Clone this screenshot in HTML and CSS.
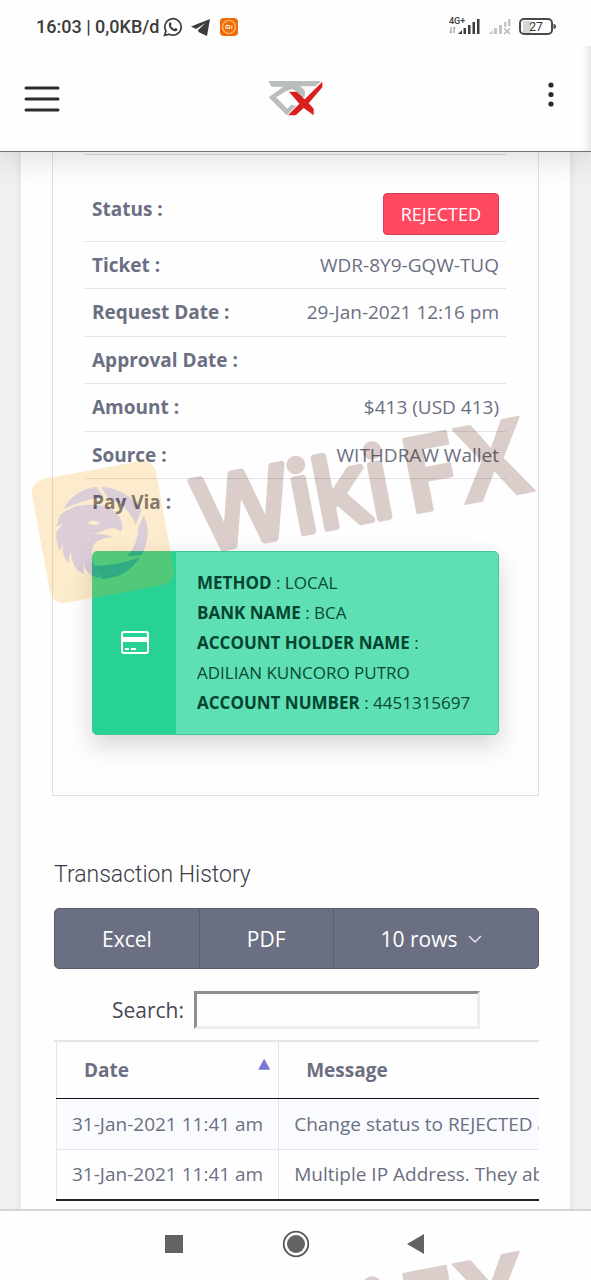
FILE: index.html
```
<!DOCTYPE html>
<html lang="en">
<head>
    <meta charset="UTF-8">
    <meta name="viewport" content="width=device-width, initial-scale=1.0">
    <title>Withdrawal</title>
    <link rel="stylesheet" href="styles.css">
</head>
<body>
    <!-- Phone status bar -->
    <div class="status-bar">
        <span class="clock">16:03 | 0,0KB/d</span>
        <svg class="status-icon" width="20" height="20" viewBox="0 0 20 20" fill="none" stroke="#3c3c3c" stroke-width="1.7">
            <path d="M1.6 18.4 L2.9 14 A8.2 8.2 0 1 1 6.2 17.2 Z"/>
            <path d="M6.6 5.6 C7.4 5 8 5.400 8.500 7.400 L7.800 8.500 C8.600 10.200 9.800 11.300 11.500 12 L12.600 10.900 C14.500 11.600 14.800 12 14.300 13 C13.400 14.600 11.500 14.600 9 13 C6.500 11.300 4.800 8 6.600 5.600 Z" fill="#3c3c3c" stroke="none"/>
        </svg>
        <svg class="status-icon plane" width="20" height="18" viewBox="0 0 20 18" fill="#3c3c3c">
            <path d="M19 1 L0 8.500 L5 11 L14.500 5 L7 12 L7.500 14 L16 18 Z"/>
        </svg>
        <svg class="status-icon" width="20" height="20" viewBox="0 0 20 20">
            <rect x="1" y="1" width="18" height="18" rx="4" fill="#ef6c0a"/>
            <circle cx="10" cy="10" r="6.500" fill="none" stroke="#ffc07a" stroke-width="1.200"/>
            <path d="M7 12 V8.500 H9.800 Q10.600 8.500 10.600 9.500 V12 M8.800 10 V12 M12.800 8.500 V12" fill="none" stroke="#fff" stroke-width="1"/>
        </svg>
        <div class="signals">
            <svg width="32" height="20" viewBox="0 0 32 20" fill="#3c3c3c">
                <text x="0" y="7" font-family="Roboto" font-size="9" font-weight="500">4G+</text>
                <path d="M2 10 V16 M1 14.500 L2 16 M5 16 V10 M6 11.500 L5 10" stroke="#888" stroke-width="1" fill="none"/>
                <path d="M9 17 L13 13 V17 Z M14.500 11 h2.500 v6 h-2.500 Z M19 8 h2.500 v9 h-2.500 Z M23.500 5 h2.500 v12 h-2.500 Z M28 2 h2.500 v15 h-2.500 Z"/>
            </svg>
            <svg width="22" height="20" viewBox="0 0 22 20" fill="#c4c4c4">
                <path d="M0 17 L3.500 13 V17 Z M5 11 h3 v6 h-3 Z M10 8 h3 v9 h-3 Z M15 5 h2.500 v5 h-2.500 Z M19 2 h2.500 v7 h-2.500 Z"/>
                <path d="M15 11.500 L21 17 M21 11.500 L15 17" stroke="#b4b4b4" stroke-width="1.400"/>
            </svg>
            <svg width="38" height="18" viewBox="0 0 38 18">
                <rect x="4" y="3" width="8" height="12" fill="#d6d6d6"/>
                <rect x="1" y="1" width="32" height="15" rx="4" fill="none" stroke="#4a4a4a" stroke-width="2"/>
                <path d="M34.500 6 Q37 6 37 8.500 T34.500 11 Z" fill="#4a4a4a"/>
                <text x="17" y="13" text-anchor="middle" font-family="Roboto" font-size="12" fill="#333">27</text>
            </svg>
        </div>
    </div>

    <!-- App header -->
    <header class="app-bar">
        <button type="button" class="icon-button" aria-label="Menu">
            <svg width="36" height="28" viewBox="0 0 36 28" stroke="#2b2b31" stroke-width="3" stroke-linecap="round">
                <path d="M2 3 H34 M2 14 H34 M2 25 H34"/>
            </svg>
        </button>
        <a href="#" class="logo" aria-label="Home">
            <svg width="56" height="38" viewBox="12 12 168 114">
                <path d="M14 15 H172 L154 31 H108 Q128 42 122 62 L108 66 Q104 44 82 40 L66 46 L36 64 L70 98 L86 82 L96 90 L68 118 L14 64 L58 32 H22 Z" fill="#b9bdbc"/>
                <path d="M66 62 L92 86" stroke="#fefefe" stroke-width="10"/>
                <path d="M75 47 H98 L122 70 L175 17 V34 L134 82 L149 98 V118 L119 96 L95 118 H72 L106 83 Z" fill="#d9201f"/>
            </svg>
        </a>
        <button type="button" class="icon-button more" aria-label="More">
            <svg width="16" height="26" viewBox="0 0 16 26" fill="#2b2b2b">
                <circle cx="8" cy="4" r="2.600"/>
                <circle cx="8" cy="13.500" r="2.600"/>
                <circle cx="8" cy="23" r="2.600"/>
            </svg>
        </button>
    </header>

    <main class="page">
        <div class="content">
            <section class="detail-box">
                <table class="details">
                    <tr class="status-row"><th scope="row">Status :</th><td><span class="badge">REJECTED</span></td></tr>
                    <tr><th scope="row">Ticket :</th><td>WDR-8Y9-GQW-TUQ</td></tr>
                    <tr><th scope="row">Request Date :</th><td>29-Jan-2021 12:16 pm</td></tr>
                    <tr><th scope="row">Approval Date :</th><td></td></tr>
                    <tr><th scope="row">Amount :</th><td>$413 (USD 413)</td></tr>
                    <tr><th scope="row">Source :</th><td>WITHDRAW Wallet</td></tr>
                    <tr><th scope="row">Pay Via :</th><td></td></tr>
                </table>
                <div class="pay-card">
                    <div class="pay-icon">
                        <svg width="28" height="24" viewBox="0 0 28 24">
                            <rect x="1" y="1" width="26" height="21" rx="2" fill="none" stroke="#fff" stroke-width="2"/>
                            <path d="M1 8.500 H27" stroke="#fff" stroke-width="5"/>
                            <path d="M4 18 H8 M10 18 H15" stroke="#fff" stroke-width="2"/>
                        </svg>
                    </div>
                    <div class="pay-text">
                        <b>METHOD</b> : LOCAL<br>
                        <b>BANK NAME</b> : BCA<br>
                        <b>ACCOUNT HOLDER NAME</b> :<br>
                        ADILIAN KUNCORO PUTRO<br>
                        <b>ACCOUNT NUMBER</b> : 4451315697
                    </div>
                </div>
            </section>

            <section class="history">
                <h2>Transaction History</h2>
                <div class="button-group">
                    <button type="button">Excel</button>
                    <button type="button">PDF</button>
                    <button type="button" class="rows-button">10 rows
                        <svg width="14" height="10" viewBox="0 0 14 10" fill="none" stroke="#e6e6ee" stroke-width="1.400"><path d="M1 2 L7 8 L13 2"/></svg>
                    </button>
                </div>
                <div class="search">
                    <label for="search">Search:</label>
                    <input type="text" id="search">
                </div>
                <div class="table-wrap">
                    <table class="log">
                        <thead>
                            <tr>
                                <th scope="col"><div class="sort">Date <span class="arrow"></span></div></th>
                                <th scope="col">Message</th>
                            </tr>
                        </thead>
                        <tbody>
                            <tr><td>31-Jan-2021 11:41 am</td><td>Change status to REJECTED and</td></tr>
                            <tr><td>31-Jan-2021 11:41 am</td><td>Multiple IP Address. They abuse</td></tr>
                        </tbody>
                    </table>
                </div>
            </section>
        </div>
    </main>

    <nav class="nav-bar">
        <button type="button" aria-label="Recents"><svg width="28" height="28" viewBox="0 0 28 28"><rect x="4" y="5" width="18" height="18" fill="#636363"/></svg></button>
        <button type="button" aria-label="Home"><svg width="28" height="28" viewBox="0 0 28 28"><circle cx="14" cy="14" r="12.300" fill="none" stroke="#555" stroke-width="1.800"/><circle cx="14" cy="14" r="9" fill="#636363"/></svg></button>
        <button type="button" aria-label="Back"><svg width="28" height="28" viewBox="0 0 28 28"><path d="M4 14 L21 4 V24 Z" fill="#636363"/></svg></button>
    </nav>

    <!-- Watermark, repeated down the page -->
    <svg class="watermark" width="530" height="220" viewBox="0 0 530 220" aria-hidden="true">
        <rect x="20" y="79" width="126" height="126" rx="14" fill="#f5aa0f" transform="rotate(-10.500 83 142)"/>
        <g fill="#551445" transform="translate(10 70) scale(0.333)">
            <path d="M100 148 Q130 90 200 80 L222 112 Q160 118 100 148 Z"/>
            <path d="M212 80 Q290 85 335 150 L318 195 Q290 130 235 115 Z"/>
            <path d="M342 165 Q368 225 335 285 L292 290 Q325 250 325 205 Z"/>
            <path d="M330 292 Q290 355 215 357 L192 318 Q260 318 330 292 Z"/>
            <path d="M90 165 Q130 130 200 135 Q260 140 275 185 Q282 205 272 215 Q255 200 230 208 Q205 222 175 222 Q220 218 250 232 Q215 232 195 250 Q178 275 190 310 L210 355 Q180 350 165 325 L160 305 L162 342 Q125 330 122 270 L115 310 Q95 290 98 245 L90 275 Q75 240 80 215 L100 190 L80 200 Z M172 188 Q195 204 212 188 L190 182 Z" fill-rule="evenodd"/>
        </g>
        <g id="wordmark" class="wm-text">
            <text transform="translate(182 162) rotate(-10.800)">Wiki</text>
            <text class="wm-fx" transform="translate(388 125) rotate(-10.800)">FX</text>
        </g>
    </svg>
    <svg class="watermark watermark-next" width="530" height="220" viewBox="0 0 530 220" aria-hidden="true">
        <use href="#wordmark"/>
    </svg>
</body>
</html>
```
FILE: styles.css
```
* {
    box-sizing: border-box;
}

body {
    margin: 0;
    height: 100vh;
    position: relative;
    display: flex;
    flex-direction: column;
    overflow: hidden;
    background: #fefefe;
    color: #6b6f82;
    font-family: "Open Sans", "Noto Sans", sans-serif;
    font-size: 19px;
    line-height: 28px;
}

button {
    font: inherit;
    border: 0;
    padding: 0;
    background: none;
    cursor: pointer;
}

svg {
    display: block;
}

/* Status bar */
.status-bar {
    flex: none;
    display: flex;
    align-items: center;
    height: 46px;
    padding: 8px 34px 0 36px;
    background: #fefefe;
    z-index: 2;
}

.clock {
    font-family: Roboto, sans-serif;
    font-size: 18px;
    font-weight: 500;
    color: #3c3c3c;
    margin-right: 4px;
}

.plane {
    margin: 0 8px;
}

.signals {
    display: flex;
    align-items: center;
    gap: 8px;
    margin-left: auto;
}

/* App header */
.app-bar {
    flex: none;
    display: grid;
    grid-template-columns: 1fr auto 1fr;
    align-items: center;
    height: 106px;
    padding: 0 32px;
    background: #fefefe;
    border-bottom: 1px solid #727272;
    box-shadow: inset -8px 0 8px -6px #ddd, 0 4px 32px rgba(0, 0, 0, 0.15);
    z-index: 1;
}

.icon-button {
    justify-self: start;
    margin-left: -8px;
}

.more {
    justify-self: end;
    padding-bottom: 10px;
}

/* Page */
.page {
    flex: 1;
    min-height: 0;
    overflow: hidden;
    padding: 0 21px;
    background: #f0f0f0;
}

.content {
    padding: 0 31px;
    background: #fefefe;
    box-shadow: 0 0 8px rgba(0, 0, 0, 0.08);
}

.detail-box {
    height: 644px;
    padding: 2px 32px 0;
    border: 1px solid #e0e0e0;
    border-top: 0;
}

.details {
    width: 100%;
    border-collapse: collapse;
    border-top: 1px solid #dcdcdc;
}

.details tr + tr {
    border-top: 1px solid #e2e3e6;
}

.details th,
.details td {
    height: 47px;
    padding: 9px 7px;
    vertical-align: top;
}

.details tr:nth-child(odd) td {
    height: 48px;
}

.details th {
    text-align: left;
    font-weight: 700;
}

.details td {
    text-align: right;
}

.details .status-row th {
    padding-top: 40px;
}

.details .status-row td {
    padding: 38px 7px 6px;
}

.badge {
    display: inline-block;
    padding: 6px 17px;
    border: 1px solid #d63e55;
    border-radius: 4px;
    background: #ff4961;
    color: #fff;
    font-size: 18px;
}

.pay-card {
    display: flex;
    margin: 24px 7px 0;
    border: 1px solid #3ec995;
    border-radius: 5px;
    background: #5fe0b4;
    color: #0a4a35;
    font-size: 17px;
    line-height: 30px;
    overflow: hidden;
    box-shadow: 0 10px 24px rgba(60, 40, 50, 0.2);
}

.pay-icon {
    flex: none;
    width: 83px;
    display: flex;
    align-items: center;
    justify-content: center;
    background: #28d294;
}

.pay-text {
    padding: 16px 21px;
    white-space: nowrap;
}

.pay-text b {
    color: #044430;
}

/* Transaction history */
.history {
    padding: 63px 0 40px 2px;
}

h2 {
    margin: 0 0 17px;
    color: #3a3c48;
    font-family: Roboto, sans-serif;
    font-size: 23px;
    font-weight: 300;
    line-height: 32px;
}

.button-group {
    display: flex;
    height: 61px;
    border: 1px solid #5a5c6c;
    border-radius: 5px;
    background: #6b6f82;
    overflow: hidden;
}

.button-group button {
    padding: 0 47px;
    color: #fff;
    font-size: 21px;
}

.button-group button + button {
    border-left: 1px solid #5a5c6c;
}

.button-group .rows-button {
    flex: 1;
    display: flex;
    align-items: center;
    gap: 10px;
}

.search {
    display: flex;
    align-items: center;
    gap: 10px;
    padding: 22px 59px 11px 58px;
    color: #464855;
    font-size: 21px;
}

.search input {
    flex: 1;
    min-width: 0;
    height: 38px;
    border: 3px solid;
    border-color: #8f8f8f #ededed #ededed #8f8f8f;
    background: #fefefe;
    font: inherit;
}

.table-wrap {
    overflow: hidden;
    border-top: 2px solid #e6e6ea;
}

.log {
    width: 600px;
    margin-left: 2px;
    border-collapse: collapse;
    border-bottom: 2px solid #222;
}

.log th {
    height: 56px;
    padding: 0 27px;
    border-bottom: 1px solid #111;
    text-align: left;
}

.log td {
    height: 51px;
    padding: 0 15px;
    border-bottom: 1px solid #e4e7ef;
    white-space: nowrap;
}

.log th:first-child,
.log td:first-child {
    width: 222px;
    border-left: 1px solid #e3e5ec;
    border-right: 1px solid #e3e5ec;
}

.log th:first-child {
    padding-right: 8px;
}

.log tbody tr:first-child {
    background: #fafbff;
}

.log tbody tr:last-child td {
    border-bottom: 2px solid #222;
}

.sort {
    display: flex;
    justify-content: space-between;
}

.arrow {
    width: 12px;
    height: 11px;
    margin-top: 3px;
    background: #7878d8;
    clip-path: polygon(50% 0, 100% 100%, 0 100%);
}

/* Phone navigation */
.nav-bar {
    flex: none;
    display: flex;
    justify-content: center;
    align-items: center;
    gap: 93px;
    height: 71px;
    padding-bottom: 3px;
    border-top: 2px solid #d4d4d4;
    background: #fefefe;
}

/* Watermark lies over the whole page */
.watermark {
    position: absolute;
    left: 20px;
    top: 390px;
    opacity: 0.2;
    z-index: 2;
    pointer-events: none;
}

.watermark-next {
    top: 1225px;
}

.wm-text {
    fill: #551400;
    stroke: #551400;
    stroke-width: 7px;
    stroke-linejoin: round;
    font-family: Inter, "Open Sans", sans-serif;
    font-size: 98px;
    font-weight: 400;
}

.wm-fx {
    stroke-width: 2px;
    font-family: "Open Sans", sans-serif;
    font-size: 106px;
    font-weight: 700;
}
```
